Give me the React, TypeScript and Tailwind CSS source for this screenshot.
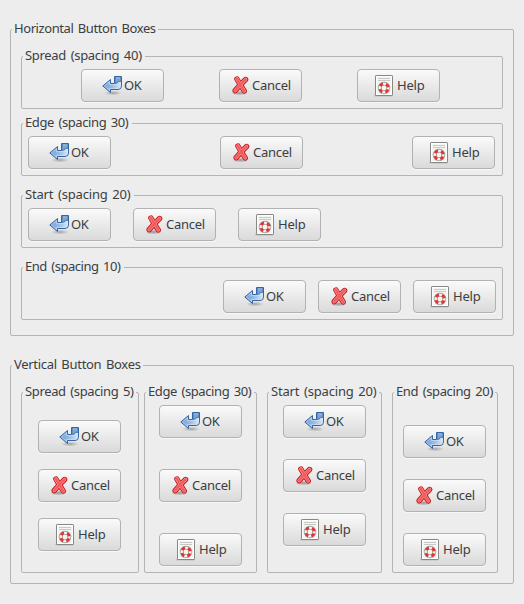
import type { ReactNode } from "react";

type Kind = "ok" | "cancel" | "help";

function OkIcon() {
  return (
    <svg width="21" height="21" viewBox="0 0 21 21" className="shrink-0">
      <defs>
        <linearGradient id="okFill" x1="0" y1="0" x2="1" y2="0">
          <stop offset="0" stopColor="#6f9fd6" />
          <stop offset="0.5" stopColor="#9bbce3" />
          <stop offset="1" stopColor="#dbe8f6" />
        </linearGradient>
        <radialGradient id="okShade">
          <stop offset="0" stopColor="#000" stopOpacity="0.28" />
          <stop offset="1" stopColor="#000" stopOpacity="0" />
        </radialGradient>
      </defs>
      <ellipse cx="11" cy="18" rx="9" ry="2.5" fill="url(#okShade)" />
      <path d="M0.8 11 L8.5 4.5 V8.5 H12.5 V1.5 H19.5 V11 Q19.5 14.5 16 14.5 H8.5 V17.5 Z" fill="url(#okFill)" stroke="#3465a4" strokeLinejoin="round" />
      <path d="M2.4 11 L7.5 6.7 V9.5 H15.5 Q18.4 9 18.4 7.6 V11 Q18.4 13.5 16 13.5 H7.5 V15.4 Z" fill="none" stroke="#dce9f8" strokeWidth="0.7" opacity="0.7" />
      <path d="M13 2 H19 V6.4 H16.3 Q16.2 8.4 13 8.4 Z" fill="#7ba3d3" stroke="#3465a4" strokeWidth="0.7" />
      <path d="M13.8 2.9 H18.3" stroke="#b4cdea" strokeWidth="0.8" />
    </svg>
  );
}

function CancelIcon() {
  return (
    <svg width="20" height="21" viewBox="0 0 20 21" className="shrink-0">
      <defs>
        <radialGradient id="cancelShade">
          <stop offset="0" stopColor="#000" stopOpacity="0.35" />
          <stop offset="1" stopColor="#000" stopOpacity="0" />
        </radialGradient>
      </defs>
      <ellipse cx="9.5" cy="18" rx="8.5" ry="2.6" fill="url(#cancelShade)" />
      <g fill="none" strokeLinecap="round" strokeLinejoin="round">
        <path d="M6.9 4 L10.3 9.8 L15.6 4.5 M5.2 15.6 L10.3 9.8 L14.2 15.9" stroke="#c4141b" strokeWidth="5.4" />
        <path d="M6.9 4 L10.3 9.8 L15.6 4.5 M5.2 15.6 L10.3 9.8 L14.2 15.9" stroke="#fa9090" strokeWidth="3.6" />
        <path d="M6.9 4 L10.3 9.8 L15.6 4.5 M5.2 15.6 L10.3 9.8 L14.2 15.9" stroke="#f25c5c" strokeWidth="2.2" />
      </g>
    </svg>
  );
}

function HelpIcon() {
  return (
    <svg width="20" height="22" viewBox="0 0 20 22" className="shrink-0">
      <path d="M0.5 20.5 H18.5" stroke="#000" strokeOpacity="0.25" strokeWidth="1.6" />
      <rect x="1.5" y="0.5" width="17" height="20" rx="0.6" fill="#f4f4f2" stroke="#868883" />
      <rect x="2.5" y="1.5" width="15" height="18" fill="none" stroke="#fff" />
      <path d="M4 3.5 H16 M4 5.5 H16" stroke="#c9cac6" />
      <circle cx="10" cy="13" r="4.3" fill="none" stroke="#8d8f8a" strokeWidth="3.8" />
      <circle cx="10" cy="13" r="4.3" fill="none" stroke="#f0efed" strokeWidth="2.6" />
      <circle cx="10" cy="13" r="4.3" fill="none" stroke="#e23434" strokeWidth="2.8" strokeDasharray="3.6 3.154" strokeDashoffset="-1.58" />
    </svg>
  );
}

function StockButton({ kind }: { kind: Kind }) {
  const inner =
    kind === "ok" ? (
      <div className="flex h-full items-start pl-[20px] pt-[5px]">
        <OkIcon />
        <span className="ml-[1px] tracking-[-0.3px]">OK</span>
      </div>
    ) : kind === "cancel" ? (
      <div className="flex h-full items-start pl-[10px] pt-[5px]">
        <CancelIcon />
        <span className="ml-[2px] tracking-[-0.25px]">Cancel</span>
      </div>
    ) : (
      <div className="flex h-full items-start pl-[16px] pt-[5px]">
        <HelpIcon />
        <span className="ml-[3px] tracking-[-0.2px]">Help</span>
      </div>
    );
  return (
    <button
      type="button"
      className="block h-[33px] w-[83px] shrink-0 rounded-[4px] border border-[#b2b2b2] bg-linear-to-b from-[#fafafa] to-[#dadada] text-left leading-[21px] shadow-[0_1px_0_#f7f7f7]"
    >
      {inner}
    </button>
  );
}

function Buttons() {
  return (
    <>
      <StockButton kind="ok" />
      <StockButton kind="cancel" />
      <StockButton kind="help" />
    </>
  );
}

function Frame({ title, label, className, children }: { title: string; label: string; className: string; children: ReactNode }) {
  return (
    <section className={`relative rounded-[2px] border border-[#b4b4b4] ${className}`}>
      <h2 className={`absolute top-[-12px] left-[1px] h-5 overflow-visible bg-[#ededed] pl-[2px] leading-[20px] whitespace-nowrap [word-spacing:1.5px] ${label}`}>{title}</h2>
      {children}
    </section>
  );
}

export default function App() {
  return (
    <main className="h-[604px] w-[524px] bg-[#ededed] px-[10px] pt-[29px] font-['Noto_Sans','Open_Sans',sans-serif] text-[13px] text-[#3a4042]">
      <Frame title="Horizontal Button Boxes" label="w-[146px] tracking-[-0.42px]" className="h-[307px] px-[10px] pt-[26px]">
        <Frame title="Spread (spacing 40)" label="w-[122px] tracking-[-0.3px]" className="flex h-[53px] gap-[55px] pt-[12px] pl-[59px]">
          <Buttons />
        </Frame>
        <Frame title="Edge (spacing 30)" label="w-[109px] tracking-[-0.4px]" className="mt-[14px] flex h-[53px] gap-[109px] pt-[12px] pl-[6px]">
          <Buttons />
        </Frame>
        <Frame title="Start (spacing 20)" label="w-[111px] tracking-[-0.18px]" className="mt-[19px] flex h-[53px] gap-[22px] pt-[12px] pl-[6px]">
          <Buttons />
        </Frame>
        <Frame title="End (spacing 10)" label="w-[101px] tracking-[-0.47px]" className="mt-[19px] flex h-[53px] justify-end gap-[12px] pt-[12px] pr-[6px]">
          <Buttons />
        </Frame>
      </Frame>

      <Frame title="Vertical Button Boxes" label="w-[131px] tracking-[-0.3px]" className="mt-[29px] flex h-[219px] items-start pt-[26px] pl-[10px]">
        <Frame title="Spread (spacing 5)" label="w-[113px] tracking-[-0.36px]" className="flex h-[181px] w-[118px] flex-col gap-[16px] pt-[27px] pl-[16px]">
          <Buttons />
        </Frame>
        <Frame title="Edge (spacing 30)" label="w-[108px] tracking-[-0.4px]" className="ml-[5px] flex h-[181px] w-[113px] flex-col gap-[31px] pt-[12px] pl-[14px]">
          <Buttons />
        </Frame>
        <Frame title="Start (spacing 20)" label="w-[110px] tracking-[-0.18px]" className="ml-[10px] flex h-[181px] w-[115px] flex-col gap-[21px] pt-[12px] pl-[15px]">
          <Buttons />
        </Frame>
        <Frame title="End (spacing 20)" label="w-[101px] tracking-[-0.37px]" className="ml-[10px] flex h-[181px] w-[106px] flex-col gap-[21px] pt-[32px] pl-[10px]">
          <Buttons />
        </Frame>
      </Frame>
    </main>
  );
}
